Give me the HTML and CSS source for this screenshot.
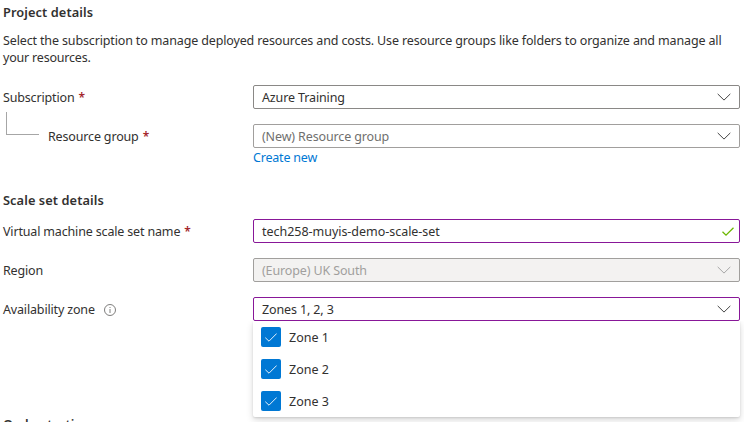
FILE: index.html
```html
<!DOCTYPE html>
<html lang="en">
<head>
<meta charset="utf-8">
<title>Create a virtual machine scale set</title>
<link rel="stylesheet" href="styles.css">
</head>
<body>
<main class="form">
  <section class="section">
    <h2 class="heading">Project details</h2>
    <p class="intro"><span class="line">Select the subscription to manage deployed resources and costs. Use resource groups like folders to organize and manage all</span> <span class="line line-end">your resources.</span></p>
    <div class="row">
      <label class="label"><span>Subscription</span><span class="required">*</span></label>
      <div class="field"><span>Azure Training</span><svg class="chevron" viewBox="0 0 14 8"><path d="M.7.9 7 7.1 13.3.9"/></svg></div>
    </div>
    <div class="row">
      <div class="label nested"><i class="branch"></i><span>Resource group</span><span class="required">*</span></div>
      <div class="field placeholder"><span>(New) Resource group</span><svg class="chevron" viewBox="0 0 14 8"><path d="M.7.9 7 7.1 13.3.9"/></svg></div>
    </div>
    <a class="link">Create new</a>
  </section>
  <section class="section scale">
    <h2 class="heading">Scale set details</h2>
    <div class="row">
      <label class="label"><span>Virtual machine scale set name</span><span class="required">*</span></label>
      <div class="field edited valid"><span class="name">tech258-muyis-demo-scale-set</span><svg class="valid-mark" viewBox="0 0 12 9"><path d="M.5 4.8 4 8.1 11.5.7"/></svg></div>
    </div>
    <div class="row">
      <label class="label"><span>Region</span></label>
      <div class="field disabled"><span>(Europe) UK South</span><svg class="chevron" viewBox="0 0 14 8"><path d="M.7.9 7 7.1 13.3.9"/></svg></div>
    </div>
    <div class="row">
      <label class="label"><span>Availability zone</span><svg class="info" viewBox="0 0 12 12"><circle cx="6" cy="6" r="5.5"/><path d="M6 5v4M6 3v1"/></svg></label>
      <div class="field edited"><span>Zones 1, 2, 3</span><svg class="chevron" viewBox="0 0 14 8"><path d="M.7.9 7 7.1 13.3.9"/></svg>
        <ul class="menu">
          <li class="option"><i class="box"><svg viewBox="0 0 12 9"><path d="M.3 4.7 4 8.2 11.7.5"/></svg></i><span>Zone 1</span></li>
          <li class="option"><i class="box"><svg viewBox="0 0 12 9"><path d="M.3 4.7 4 8.2 11.7.5"/></svg></i><span>Zone 2</span></li>
          <li class="option"><i class="box"><svg viewBox="0 0 12 9"><path d="M.3 4.7 4 8.2 11.7.5"/></svg></i><span>Zone 3</span></li>
        </ul>
      </div>
    </div>
  </section>
  <section class="section next">
    <h2 class="heading">Orchestration</h2>
  </section>
</main>
</body>
</html>
```

FILE: styles.css
```css
* { box-sizing: border-box; }
body {
  margin: 0;
  height: 422px;
  overflow: hidden;
  background: #fff;
  color: #323130;
  font: 12.5px/17px "Noto Sans", "Open Sans", sans-serif;
}
.form { padding: 3px 4px 0 3px; }
.heading { margin: 0; font-size: 12.8px; line-height: 18px; font-weight: 600; letter-spacing: .08px; }
.intro { margin: 11px 0 19px; }
.line { display: block; white-space: nowrap; letter-spacing: -.14px; }
.line-end { letter-spacing: -.2px; }
.row {
  display: grid;
  grid-template-columns: 250px 487px;
  height: 24px;
  margin-bottom: 15px;
}
.label { display: flex; align-items: center; white-space: nowrap; letter-spacing: -.16px; }
.required { margin-left: 4px; color: #a4262c; font-size: 12px; font-weight: 600; }
.branch {
  width: 33px;
  height: 23px;
  margin: -26px 9px 0 3px;
  border: solid #a6a6a6;
  border-width: 0 0 1px 1px;
}
.field {
  position: relative;
  display: flex;
  align-items: center;
  justify-content: space-between;
  padding: 0 8px;
  border: 1px solid #8a8886;
  border-radius: 2px;
  white-space: nowrap;
  letter-spacing: -.13px;
}
.name { letter-spacing: -.03px; }
.placeholder { color: #706f6e; border-color: #a19f9d; }
.edited { border-color: #881798; }
.valid { padding-right: 5px; }
.disabled { color: #a19f9d; background: #f3f2f1; border-color: #a19f9d; }
svg { fill: none; stroke: #444; flex: none; }
.chevron { width: 14px; height: 8px; }
.disabled .chevron { stroke: #a6a6a6; }
.valid-mark { width: 12px; height: 9px; stroke: #6bb700; stroke-width: 1.3; }
.info { width: 12px; height: 12px; margin: 1px 0 0 9px; stroke: #706f6e; stroke-width: .9; }
.link { display: block; margin: -14px 0 0 250px; color: #0078d4; letter-spacing: -.2px; }
.scale { margin-top: 25px; }
.scale .heading { margin-bottom: 10px; }
.menu {
  position: absolute;
  z-index: 1;
  top: 23px;
  left: -1px;
  width: 487px;
  height: 96px;
  margin: 0;
  padding: 0 8px;
  list-style: none;
  letter-spacing: 0;
  background: #fff;
  border-radius: 0 0 2px 2px;
  box-shadow: 0 3px 7px rgba(0,0,0,.15), 0 1px 2px rgba(0,0,0,.11);
  clip-path: inset(0 -12px -12px);
}
.option { display: flex; align-items: center; height: 32px; }
.box {
  display: flex;
  align-items: center;
  justify-content: center;
  width: 20px;
  height: 20px;
  margin-right: 8px;
  border-radius: 2px;
  background: #0078d4;
}
.box svg { width: 12px; height: 9px; stroke: #fff; stroke-width: .9; }
.next { margin-top: 94px; }
```
